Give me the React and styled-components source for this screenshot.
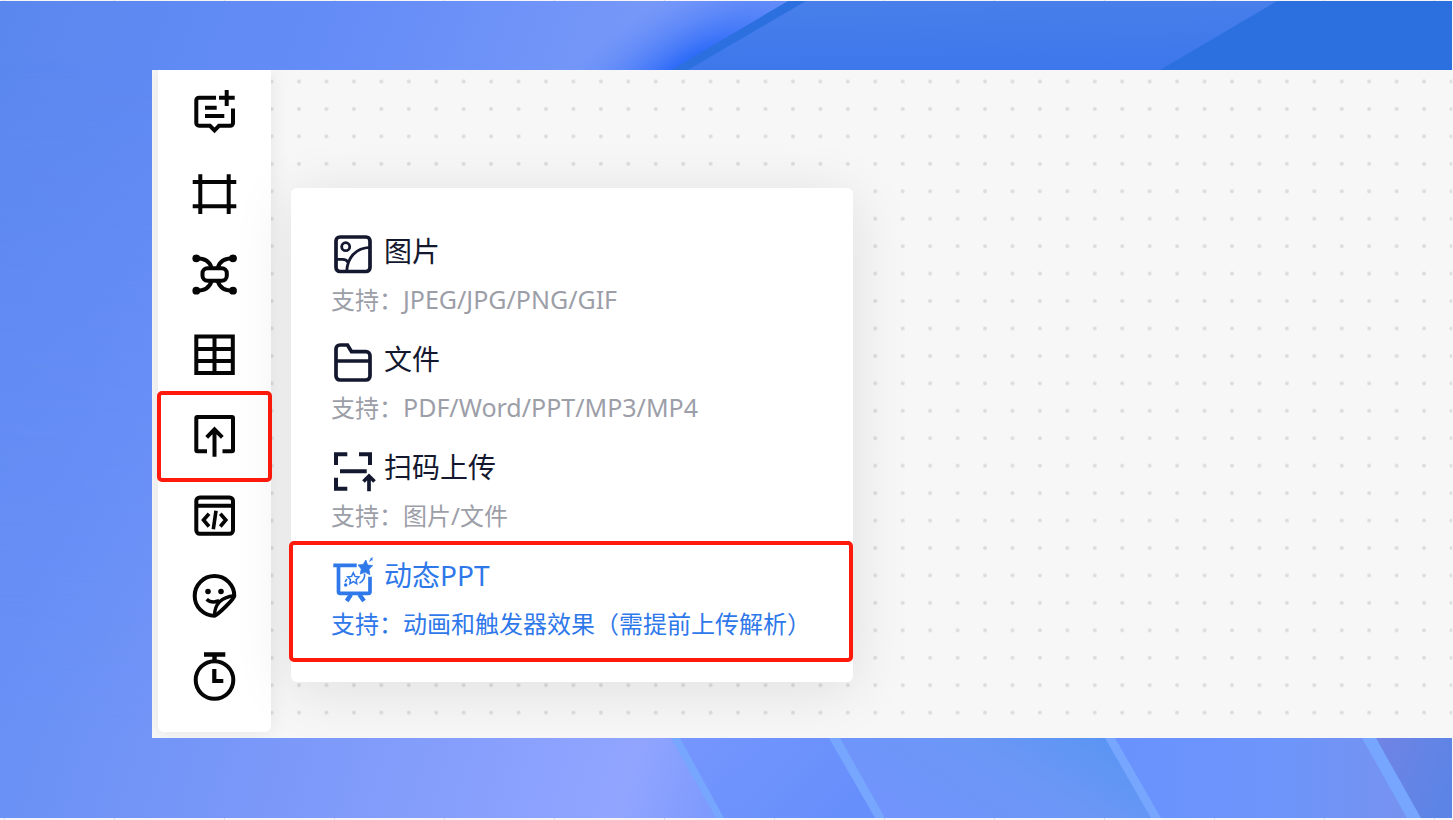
import React from "react";
import styled, { createGlobalStyle, css } from "styled-components";

const GlobalStyle = createGlobalStyle`
  * {
    box-sizing: border-box;
  }
  body {
    margin: 0;
    font-family: "Noto Sans", "Noto Sans CJK SC", sans-serif;
  }
  button {
    font: inherit;
    color: inherit;
    background: none;
    border: 0;
    padding: 0;
    cursor: pointer;
  }
`;

const Backdrop = () => (
  <BackdropSvg viewBox="0 0 1452 817" preserveAspectRatio="none" aria-hidden="true">
    <defs>
      <linearGradient id="base" gradientUnits="userSpaceOnUse" x1="0" y1="0" x2="700" y2="260">
        <stop offset="0" stopColor="#5a87ee" />
        <stop offset="0.42" stopColor="#648cf7" />
        <stop offset="0.8" stopColor="#7597f8" />
        <stop offset="1" stopColor="#7d9cf9" />
      </linearGradient>
      <linearGradient id="floor" gradientUnits="userSpaceOnUse" x1="0" y1="700" x2="720" y2="900">
        <stop offset="0" stopColor="#6890f5" />
        <stop offset="0.4" stopColor="#7c99f9" />
        <stop offset="0.84" stopColor="#91a5ff" />
        <stop offset="1" stopColor="#7696fc" />
      </linearGradient>
      <linearGradient id="fade" x1="0" y1="0" x2="0" y2="1">
        <stop offset="0" stopColor="#000" />
        <stop offset="1" stopColor="#fff" />
      </linearGradient>
      <mask id="sideMask">
        <rect y="60" width="160" height="677" fill="url(#fade)" />
      </mask>
      <radialGradient
        id="glow"
        gradientUnits="userSpaceOnUse"
        cx="0"
        cy="0"
        r="1"
        gradientTransform="translate(695 78) rotate(-32) scale(190 86)"
      >
        <stop offset="0" stopColor="#2465f8" />
        <stop offset="0.25" stopColor="#2f6cf8" />
        <stop offset="1" stopColor="#5f8afa" stopOpacity="0" />
      </radialGradient>
      <linearGradient id="panel" x1="0.4" y1="0" x2="0.5" y2="1">
        <stop offset="0" stopColor="#487fea" />
        <stop offset="1" stopColor="#3d77eb" />
      </linearGradient>
      <linearGradient id="slabA" x1="0" y1="0" x2="1" y2="0.4">
        <stop offset="0" stopColor="#7596fd" />
        <stop offset="1" stopColor="#678ffb" />
      </linearGradient>
      <linearGradient id="slabB" x1="0" y1="0.4" x2="1" y2="0">
        <stop offset="0" stopColor="#7094fb" />
        <stop offset="0.5" stopColor="#6b97f6" />
        <stop offset="1" stopColor="#5494f2" />
      </linearGradient>
      <linearGradient id="slabC" x1="0" y1="0" x2="1" y2="0">
        <stop offset="0" stopColor="#6a92fe" />
        <stop offset="0.55" stopColor="#6d95fa" />
        <stop offset="1" stopColor="#7792ef" />
      </linearGradient>
      <linearGradient id="slabD" x1="0" y1="0" x2="1" y2="0.4">
        <stop offset="0" stopColor="#7184e4" />
        <stop offset="1" stopColor="#5c84e6" />
      </linearGradient>
    </defs>
    <rect width="1452" height="817" fill="url(#base)" />
    <rect y="60" width="160" height="677" fill="url(#floor)" mask="url(#sideMask)" />
    <rect x="460" width="360" height="80" fill="url(#glow)" />
    <path d="M788 0H1452V127H573Z" fill="#2c70df" />
    <path d="M806 0H1277L1160 69H688Z" fill="url(#panel)" />

    <rect y="737" width="730" height="80" fill="url(#floor)" />
    <path d="M676 737H836L880 817H720Z" fill="url(#slabA)" />
    <path d="M836 737H1112L1157 817H880Z" fill="url(#slabB)" />
    <path d="M1112 737H1372L1417 817H1157Z" fill="url(#slabC)" />
    <path d="M1372 737H1452V817H1417Z" fill="url(#slabD)" />
    <g fill="#76a6fd">
      <path d="M671 737H680L724 817H716Z" />
      <path d="M829 737H840L885 817H875Z" />
      <path d="M1105 737H1115L1161 817H1151Z" />
      <path d="M1362 737H1376L1421 817H1407Z" />
    </g>
  </BackdropSvg>
);

const Dots = () => (
  <DotsSvg aria-hidden="true">
    <defs>
      <pattern id="dots" width="27.44" height="27.44" x="133.3" y="-2.2" patternUnits="userSpaceOnUse">
        <circle cx="13.72" cy="13.72" r="2" fill="#dcdcdc" />
      </pattern>
    </defs>
    <rect width="100%" height="100%" fill="url(#dots)" />
  </DotsSvg>
);

const tools = [
  {
    label: "便签",
    icon: (
      <>
        <path d="M26 10.7H9a2.7 2.7 0 0 0-2.7 2.7V36A2.7 2.7 0 0 0 9 38.8h11l4.5 4.6 4.5-4.6h11.3a2.7 2.7 0 0 0 2.7-2.7V21.5" />
        <path d="M36.7 3v16M29 10.7h15.7M15 20.7h11.7M15 29h19.3" />
      </>
    ),
  },
  {
    label: "画框",
    icon: <path d="M10.3 6.3V46M38.7 6.3V46M2.7 14h43.6M2.7 38.3h43.6" />,
  },
  {
    label: "思维导图",
    icon: (
      <>
        <rect x="12.5" y="19.3" width="24.3" height="12.4" rx="5" />
        <path d="M6.3 9.3C15 9.3 20 13 21.5 19M43 9.3C34.3 9.3 29.3 13 27.8 19M6.3 41.7C15 41.7 20 38 21.5 32M43 41.7C34.3 41.7 29.3 38 27.8 32" />
        <g fill="currentColor" stroke="none">
          <circle cx="6.3" cy="9.3" r="3.9" />
          <circle cx="43" cy="9.3" r="3.9" />
          <circle cx="6.3" cy="41.7" r="3.9" />
          <circle cx="43" cy="41.7" r="3.9" />
        </g>
      </>
    ),
  },
  {
    label: "表格",
    icon: <path d="M6.3 6.5h36.5v36.5H6.3zM24.5 6.5V43M6.3 19h36.5M6.3 31h36.5" />,
  },
  {
    label: "上传",
    marked: true,
    icon: (
      <>
        <path d="M17 40.3H7.3a1 1 0 0 1-1-1V7a1 1 0 0 1 1-1H42a1 1 0 0 1 1 1v32.3a1 1 0 0 1-1 1h-9.5" />
        <path d="M24.5 45.7V18M16.7 26.3l7.8-8 7.8 8" />
      </>
    ),
  },
  {
    label: "嵌入代码",
    icon: (
      <>
        <rect x="6.3" y="5.5" width="36.7" height="36.3" rx="3.5" />
        <path d="M6.3 13.7H43" />
        <path d="M19 21.7L13.5 28l5.5 6.5M30.3 21.7L35.8 28l-5.5 6.5M26 18.7l-2.7 18.6" strokeWidth="3.6" />
      </>
    ),
  },
  {
    label: "贴纸",
    icon: (
      <>
        <path d="M24.5 42.7A19.8 19.8 0 1 1 44.3 22.9C44 26 28 42 24.5 42.7Z" />
        <path d="M44 22.7C32 24 24.5 31 24.5 42.7" strokeWidth="3.4" />
        <path d="M16.7 26.3c3 2.8 8 3.2 12.5 1.5" strokeWidth="3.6" />
        <circle cx="18" cy="18.5" r="2.8" fill="currentColor" stroke="none" />
        <circle cx="31" cy="18.5" r="2.8" fill="currentColor" stroke="none" />
      </>
    ),
  },
  {
    label: "计时器",
    icon: (
      <>
        <circle cx="24.5" cy="26" r="18.8" />
        <path d="M14 0.5h21.3M24.5 0.5v7" strokeWidth="4.4" />
        <path d="M24.3 15v12h9" strokeWidth="4.2" />
      </>
    ),
  },
];

const uploads = [
  {
    title: "图片",
    hint: "支持：",
    formats: "JPEG/JPG/PNG/GIF",
    icon: (
      <>
        <rect x="5" y="5" width="34" height="34.5" rx="4" />
        <g strokeWidth="2.8">
          <circle cx="14.7" cy="14.7" r="4" />
          <path d="M39 15.3C25 16 16.5 25 15.7 39M5 27.3h6.5c3 0 4.7 1.2 5.5 3.3" />
        </g>
      </>
    ),
  },
  {
    title: "文件",
    hint: "支持：",
    formats: "PDF/Word/PPT/MP3/MP4",
    icon: (
      <path d="M5 21h34M9 5h7.5l4 6.7H35a4 4 0 0 1 4 4V36a4 4 0 0 1-4 4H9a4 4 0 0 1-4-4V9a4 4 0 0 1 4-4z" />
    ),
  },
  {
    title: "扫码上传",
    hint: "支持：图片/文件",
    icon: (
      <>
        <path d="M16.3 6.3H5V17M28 6.3h11V17M5 29.7v11h11.3M9 23.3h26.7" strokeWidth="4" />
        <path d="M38 43.3V28M32.5 33.5l5.5-5.5 5.5 5.5" />
      </>
    ),
  },
  {
    title: "动态PPT",
    hint: "支持：动画和触发器效果（需提前上传解析）",
    active: true,
    icon: (
      <>
        <path d="M2.3 9.3h23.4M7.5 9.3v26.5a1.5 1.5 0 0 0 1.5 1.5h28.5a1.5 1.5 0 0 0 1.5-1.5V20.7" />
        <path d="M20 38.5L15.7 45M28.3 38.5L33 45" strokeWidth="4.4" />
        <path
          d="M34.8 4l1.8 5 5 .6-3.6 3.8.8 5.3-4.7-2.6-4.8 2 1-5.1-3.3-4 5.2-.5z"
          fill="currentColor"
          strokeWidth="0.8"
        />
        <path d="M39.5 2.5l2 1.8M41.5 1.5l-3 4" strokeWidth="1.2" />
        <path
          d="M22.3 16.8l1.7 3.6 4 .5-2.9 2.8.7 4-3.5-2-3.5 2 .7-4-2.9-2.8 4-.5z"
          strokeWidth="1.5"
        />
        <path d="M33.5 17.5c1 4-1.5 8-5 9.5M16 23l-2 3" strokeWidth="1.6" />
        <circle cx="14.7" cy="29" r="1.8" fill="currentColor" stroke="none" />
      </>
    ),
  },
];

const App = () => {
  return (
    <Page>
      <GlobalStyle />
      <Backdrop />
      <Canvas>
        <Dots />
        <Toolbar aria-label="工具栏">
          {tools.map((tool) => (
            <ToolButton key={tool.label} type="button" aria-label={tool.label} $marked={tool.marked}>
              <ToolIcon viewBox="0 0 49 49">{tool.icon}</ToolIcon>
            </ToolButton>
          ))}
        </Toolbar>
        <UploadMenu>
          {uploads.map((item) => (
            <UploadItem key={item.title} type="button" $active={item.active}>
              <ItemHead>
                <ItemIcon viewBox="0 0 44 44">{item.icon}</ItemIcon>
                <ItemTitle>{item.title}</ItemTitle>
              </ItemHead>
              <ItemHint $active={item.active}>
                {item.hint}
                {item.formats && <Formats>{item.formats}</Formats>}
              </ItemHint>
            </UploadItem>
          ))}
        </UploadMenu>
      </Canvas>
    </Page>
  );
};

export default App;

const Page = styled.div`
  position: relative;
  min-height: 100vh;
  padding: 70px 1px 82px 152px;
  background: repeating-linear-gradient(
    90deg,
    #f5f5f7 0 4px,
    #dedee2 4px 5px,
    #f5f5f7 5px 110px
  );
`;
const BackdropSvg = styled.svg`
  position: absolute;
  top: 1px;
  left: 0;
  width: calc(100% - 1px);
  height: calc(100% - 3px);
`;
const Canvas = styled.main`
  position: relative;
  display: flex;
  align-items: flex-start;
  gap: 20px;
  padding: 0 6px 6px;
  background: #f7f7f7;
  overflow: hidden;
`;
const DotsSvg = styled.svg`
  position: absolute;
  inset: 0;
  width: 100%;
  height: 100%;
`;
const Toolbar = styled.nav`
  position: relative;
  display: flex;
  flex-direction: column;
  flex-shrink: 0;
  width: 113px;
  padding: 1px 0 13px;
  background: #fff;
  border-radius: 0 0 6px 6px;
  box-shadow: 0 0 20px rgba(0, 0, 0, 0.08);
`;
const redFrame = css`
  content: "";
  position: absolute;
  border: 4px solid #ff1a0c;
  border-radius: 5px;
  pointer-events: none;
`;
const ToolButton = styled.button`
  position: relative;
  display: flex;
  justify-content: center;
  align-items: center;
  height: 81px;
  ${(props) =>
    props.$marked &&
    css`
      &::after {
        ${redFrame}
        inset: -4px -1px -6px;
      }
    `}
`;
const ToolIcon = styled.svg`
  width: 49px;
  height: 49px;
  overflow: visible;
  fill: none;
  stroke: currentColor;
  stroke-width: 4;
  color: #050505;
`;
const UploadMenu = styled.section`
  position: relative;
  display: flex;
  flex-direction: column;
  flex: 0 0 auto;
  width: 562px;
  margin-top: 118px;
  padding: 32px 0 30px;
  background: #fff;
  border-radius: 6px;
  box-shadow: 0 8px 60px rgba(20, 20, 30, 0.1);
`;
const UploadItem = styled.button`
  position: relative;
  display: flex;
  flex-direction: column;
  gap: 8px;
  padding: 12px 40px;
  text-align: left;
  color: ${(props) => (props.$active ? "#2f78ea" : "#14182f")};
  ${(props) =>
    props.$active &&
    css`
      &::after {
        ${redFrame}
        inset: -3px 0 -10px -2px;
      }
    `}
`;
const ItemHead = styled.span`
  display: flex;
  gap: 9px;
`;
const ItemIcon = styled.svg`
  width: 44px;
  height: 44px;
  overflow: visible;
  fill: none;
  stroke: currentColor;
  stroke-width: 3.7;
`;
const ItemTitle = styled.span`
  font-size: 28px;
  line-height: 38px;
`;
const ItemHint = styled.span`
  font-size: 24px;
  line-height: 32px;
  white-space: nowrap;
  color: ${(props) => (props.$active ? "#2f78ea" : "#9c9ea8")};
`;
const Formats = styled.span`
  font-size: 25px;
  line-height: 1;
`;
